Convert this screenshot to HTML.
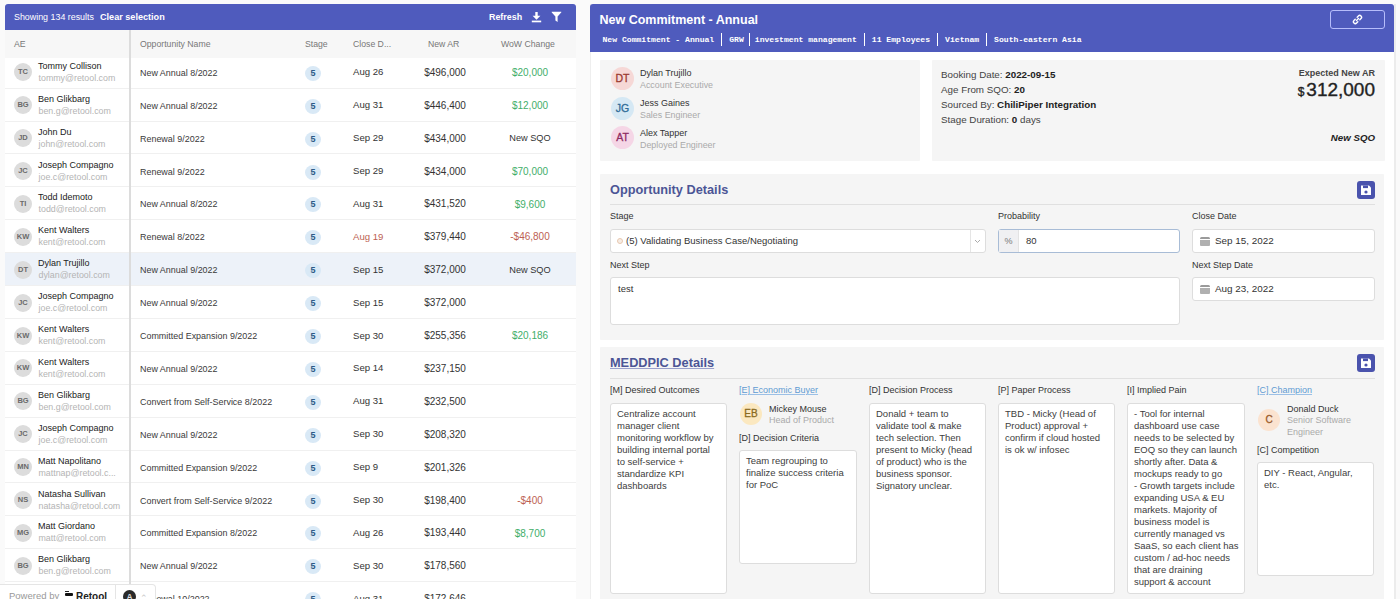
<!DOCTYPE html>
<html><head><meta charset="utf-8"><title>Opportunities</title>
<style>
*{box-sizing:border-box;margin:0;padding:0}
html,body{width:1400px;height:599px;overflow:hidden;background:#fafafa;font-family:"Liberation Sans",sans-serif;color:#333;position:relative}
.abs{position:absolute}
/* left panel */
#lp{position:absolute;left:5px;top:4px;width:571px;height:620px;background:#fff}
#lhead{position:absolute;left:5px;top:4px;width:571px;height:26px;background:#4f5bbd;border-radius:3px 3px 0 0;color:#fff;font-size:10px}
#lhead .t1{position:absolute;left:9px;top:7.5px;font-size:8.9px}
#lhead .t2{position:absolute;left:95px;top:7.5px;font-weight:bold;font-size:9.1px}
#lhead .rf{position:absolute;left:484px;top:8px;font-weight:bold;font-size:8.9px}
#thead{position:absolute;left:5px;top:30px;width:571px;height:28px;background:#f7f7f7;font-size:8.7px;color:#777;z-index:2}
#thead div{position:absolute;top:9px}
.vsep{position:absolute;left:129px;top:30px;width:1.5px;height:570px;background:#dcdcdc;z-index:3}
.row{position:absolute;left:5px;width:571px;background:#fff;height:32.9px;border-bottom:1px solid #f0f0f0;font-size:10px;color:#333}
.row.sel{background:#edf2f9}
.row .av{position:absolute;left:9px;top:7.5px;width:18px;height:18px;border-radius:50%;background:#dcdcdc;color:#6a6a6a;font-size:7.5px;font-weight:bold;text-align:center;line-height:18px}
.row .nm{position:absolute;left:33px;top:5px;font-size:9px;color:#222}
.row .em{position:absolute;left:33.5px;top:17px;font-size:8.85px;color:#b4b4b4}
.row .opp{position:absolute;left:135px;top:12px;font-size:8.95px;color:#3a3a3a}
.row .badge{position:absolute;left:300px;top:10px;width:16px;height:15px;border-radius:50%;background:#d9e9f6;color:#2d5b87;font-size:9px;font-weight:bold;text-align:center;line-height:15px}
.row .dt{position:absolute;left:348px;top:10.5px;font-size:9.6px;color:#333}
.row .dt.red{color:#bd5f53}
.row .ar{position:absolute;left:400px;width:80px;text-align:center;top:11px;font-size:10px;color:#333}
.row .wow{position:absolute;left:485px;width:80px;text-align:center;top:11.2px;font-size:10px;color:#333}
.row .wow.n{font-size:9.2px;top:11.5px}
.row .wow.g{color:#3fae6a}
.row .wow.r{color:#bd5f53}
#footer{z-index:5;position:absolute;left:0;top:584px;width:156px;height:20px;background:#fff;border:1px solid #e5e5e5;border-left:none;border-radius:0 4px 0 0;font-size:10px}
/* right panel */
#rp{position:absolute;left:590px;top:4px;width:806px;height:600px;background:#fff;border-left:1px solid #eee;border-right:2px solid #ececec}
#rhead{position:absolute;left:590px;top:4px;width:804px;height:48px;background:#4f5bbd;border-radius:3px 3px 0 0;color:#fff}
#rhead .title{position:absolute;left:9.5px;top:8.7px;font-size:12.5px;font-weight:bold}
#rhead .sub{position:absolute;left:12.5px;top:29.2px;font-family:"Liberation Mono",monospace;font-size:8.1px;font-weight:bold;white-space:nowrap}
#rhead .btn{position:absolute;left:740px;top:6px;width:55px;height:19px;border:1.8px solid #b6bdfb;border-radius:3px}
.card{position:absolute;background:#f5f5f5;border-radius:1px}
.lbl{position:absolute;font-size:9.5px;color:#333}
.inp{position:absolute;background:#fff;border:1px solid #ddd;border-radius:3px;font-size:9.5px;color:#333}
.mbox{position:absolute;background:#fff;border:1px solid #ddd;border-radius:3px;font-size:9.5px;color:#404040;padding:4px 6px;line-height:12px;white-space:nowrap;overflow:hidden}
#footer .pw{position:absolute;left:9px;top:5px;color:#999;font-size:9.5px}
#footer .rt{position:absolute;left:64px;top:5.5px;color:#222;font-size:10px;font-weight:bold;padding-left:12px}
#footer .lg{position:absolute;left:0.5px;top:2.5px;width:8px;height:3px;background:#111;border-radius:1px}#footer .lg:before{content:"";position:absolute;left:0.5px;top:-2.5px;width:3.5px;height:1.2px;background:#222}
#footer .dv{position:absolute;left:115px;top:0;width:1px;height:20px;background:#e5e5e5}
#footer .ua{position:absolute;left:123px;top:5px;width:13px;height:13px;border-radius:50%;background:#2a2a2a;color:#ddd;font-size:8.5px;font-weight:bold;text-align:center;line-height:14px}
#footer .ch{position:absolute;left:140px;top:8px;color:#c8c8c8;font-size:9px}
#rhead .sub span{display:inline-block;padding:0 7px;border-left:1.5px solid #fff;line-height:13px}
#rhead .sub span:first-child{border-left:none;padding-left:0}
.pav{position:absolute;left:11px;width:23px;height:23px;border-radius:50%;font-size:10.5px;font-weight:normal;-webkit-text-stroke:0.3px currentColor;text-align:center;line-height:23px}
.pnm{position:absolute;left:40px;font-size:9px;color:#333}
.prl{position:absolute;left:40px;font-size:8.9px;color:#aaa}
.bk{position:absolute;left:9px;font-size:9.8px;color:#444}
.bk b{color:#222}
.exp{position:absolute;right:10px;top:8px;font-size:9px;color:#444;font-weight:bold}
.amt{position:absolute;right:10px;top:18.7px;font-size:19px;color:#222;-webkit-text-stroke:0.35px #222}
.amt .dl{font-size:12px;margin-right:2px}
.nsqo{position:absolute;right:10px;top:72px;font-size:9.7px;font-weight:bold;font-style:italic;color:#222}
.ctitle{position:absolute;left:10px;font-size:12.75px;font-weight:bold;color:#4c5596}
.ctitle.u{text-decoration:underline;text-decoration-color:#9aa0cc}
.save{position:absolute;left:757px;width:18px;height:18px;background:#4a53ad;border-radius:3px}
.hr{position:absolute;left:10px;width:765px;height:1px;background:#e0e0e0}
.lbl{position:absolute;font-size:9px;color:#333}
.lbl.link{color:#5f9bd3;text-decoration:underline;text-decoration-color:#9cc0e6}
.inp{position:absolute;background:#fff;border:1px solid #ddd;border-radius:3px}
.inp .itx{position:absolute;top:5px;font-size:9.5px;color:#333;white-space:nowrap}
.inp .dot{position:absolute;left:6px;top:8px;width:6px;height:6px;border-radius:50%;border:1px solid #e8c8b0;background:#f6ece4}
.inp .selsep{position:absolute;left:359px;top:0;width:1px;height:22px;background:#e5e5e5}
.inp.prob{border-color:#a8bcd6}
.inp .pct{position:absolute;left:0;top:0;width:20px;height:22px;background:#f0f0f2;border-right:1px solid #e3e3e3;font-style:normal;font-size:9px;color:#777;text-align:center;line-height:22px}
.inp .cal{position:absolute;left:6.5px;top:6.5px;width:10px;height:9.5px;background:linear-gradient(#9a9a9a 0,#9a9a9a 1.7px,#fff 1.7px,#fff 3.3px,#b0b0b0 3.3px);border-radius:1.5px 1.5px 1px 1px}
.inp .dtx{font-size:9.9px;top:5px}
.mbox{position:absolute;background:#fff;border:1px solid #ddd;border-radius:3px;font-size:9.5px;color:#404040;padding:4px 6px;line-height:12px;white-space:nowrap;overflow:hidden}
.mav{position:absolute;width:22px;height:22px;border-radius:50%;font-size:10px;text-align:center;line-height:22px;-webkit-text-stroke:0.3px currentColor}
.mnm{position:absolute;font-size:9px;color:#333}
.mrl{position:absolute;font-size:9px;color:#aaa;line-height:12px}

</style></head><body>
<div id="lp"></div>
<div id="lhead"><span class="t1">Showing 134 results</span><span class="t2">Clear selection</span><span class="rf">Refresh</span>
<svg class="abs" style="left:526px;top:8px" width="11" height="11" viewBox="0 0 11 11"><rect x="4.3" y="0" width="2.4" height="4.5" fill="#fff"/><path d="M1.6 3.8h7.8L5.5 7.7z" fill="#fff"/><rect x="0.8" y="8.6" width="9.4" height="1.7" fill="#fff"/></svg>
<svg class="abs" style="left:546px;top:7px" width="11" height="12" viewBox="0 0 11 12"><path d="M0.8 0.8h9.4Q10.6 0.8 10.2 1.6L6.6 5.6V11L4.4 9.6V5.6L0.8 1.6Q0.4 0.8 0.8 0.8z" fill="#fff"/></svg>
</div>
<div id="thead"><div style="left:9px">AE</div><div style="left:135px">Opportunity Name</div><div style="left:300px">Stage</div><div style="left:348px">Close D...</div><div style="left:423px">New AR</div><div style="left:496px">WoW Change</div></div>
<div class="row" style="top:55.8px"><div class="av">TC</div><div class="nm">Tommy Collison</div><div class="em">tommy@retool.com</div><div class="opp">New Annual 8/2022</div><div class="badge">5</div><div class="dt">Aug 26</div><div class="ar">$496,000</div><div class="wow g">$20,000</div></div>
<div class="row" style="top:88.69999999999999px"><div class="av">BG</div><div class="nm">Ben Glikbarg</div><div class="em">ben.g@retool.com</div><div class="opp">New Annual 8/2022</div><div class="badge">5</div><div class="dt">Aug 31</div><div class="ar">$446,400</div><div class="wow g">$12,000</div></div>
<div class="row" style="top:121.6px"><div class="av">JD</div><div class="nm">John Du</div><div class="em">john@retool.com</div><div class="opp">Renewal 9/2022</div><div class="badge">5</div><div class="dt">Sep 29</div><div class="ar">$434,000</div><div class="wow n">New SQO</div></div>
<div class="row" style="top:154.5px"><div class="av">JC</div><div class="nm">Joseph Compagno</div><div class="em">joe.c@retool.com</div><div class="opp">Renewal 9/2022</div><div class="badge">5</div><div class="dt">Sep 29</div><div class="ar">$434,000</div><div class="wow g">$70,000</div></div>
<div class="row" style="top:187.39999999999998px"><div class="av">TI</div><div class="nm">Todd Idemoto</div><div class="em">todd@retool.com</div><div class="opp">New Annual 8/2022</div><div class="badge">5</div><div class="dt">Aug 31</div><div class="ar">$431,520</div><div class="wow g">$9,600</div></div>
<div class="row" style="top:220.3px"><div class="av">KW</div><div class="nm">Kent Walters</div><div class="em">kent@retool.com</div><div class="opp">Renewal 8/2022</div><div class="badge">5</div><div class="dt red">Aug 19</div><div class="ar">$379,440</div><div class="wow r">-$46,800</div></div>
<div class="row sel" style="top:253.2px"><div class="av">DT</div><div class="nm">Dylan Trujillo</div><div class="em">dylan@retool.com</div><div class="opp">New Annual 9/2022</div><div class="badge">5</div><div class="dt">Sep 15</div><div class="ar">$372,000</div><div class="wow n">New SQO</div></div>
<div class="row" style="top:286.09999999999997px"><div class="av">JC</div><div class="nm">Joseph Compagno</div><div class="em">joe.c@retool.com</div><div class="opp">New Annual 9/2022</div><div class="badge">5</div><div class="dt">Sep 15</div><div class="ar">$372,000</div><div class="wow "></div></div>
<div class="row" style="top:319.0px"><div class="av">KW</div><div class="nm">Kent Walters</div><div class="em">kent@retool.com</div><div class="opp">Committed Expansion 9/2022</div><div class="badge">5</div><div class="dt">Sep 30</div><div class="ar">$255,356</div><div class="wow g">$20,186</div></div>
<div class="row" style="top:351.9px"><div class="av">KW</div><div class="nm">Kent Walters</div><div class="em">kent@retool.com</div><div class="opp">New Annual 9/2022</div><div class="badge">5</div><div class="dt">Sep 14</div><div class="ar">$237,150</div><div class="wow "></div></div>
<div class="row" style="top:384.8px"><div class="av">BG</div><div class="nm">Ben Glikbarg</div><div class="em">ben.g@retool.com</div><div class="opp">Convert from Self-Service 8/2022</div><div class="badge">5</div><div class="dt">Aug 31</div><div class="ar">$232,500</div><div class="wow "></div></div>
<div class="row" style="top:417.7px"><div class="av">JC</div><div class="nm">Joseph Compagno</div><div class="em">joe.c@retool.com</div><div class="opp">New Annual 9/2022</div><div class="badge">5</div><div class="dt">Sep 30</div><div class="ar">$208,320</div><div class="wow "></div></div>
<div class="row" style="top:450.59999999999997px"><div class="av">MN</div><div class="nm">Matt Napolitano</div><div class="em">mattnap@retool.c...</div><div class="opp">Committed Expansion 9/2022</div><div class="badge">5</div><div class="dt">Sep 9</div><div class="ar">$201,326</div><div class="wow "></div></div>
<div class="row" style="top:483.5px"><div class="av">NS</div><div class="nm">Natasha Sullivan</div><div class="em">natasha@retool.com</div><div class="opp">Convert from Self-Service 9/2022</div><div class="badge">5</div><div class="dt">Sep 30</div><div class="ar">$198,400</div><div class="wow r">-$400</div></div>
<div class="row" style="top:516.4px"><div class="av">MG</div><div class="nm">Matt Giordano</div><div class="em">matt@retool.com</div><div class="opp">Committed Expansion 8/2022</div><div class="badge">5</div><div class="dt">Aug 26</div><div class="ar">$193,440</div><div class="wow g">$8,700</div></div>
<div class="row" style="top:549.3px"><div class="av">BG</div><div class="nm">Ben Glikbarg</div><div class="em">ben.g@retool.com</div><div class="opp">New Annual 9/2022</div><div class="badge">5</div><div class="dt">Sep 30</div><div class="ar">$178,560</div><div class="wow "></div></div>
<div class="row" style="top:582.1999999999999px"><div class="av">RS</div><div class="nm">Ryan Sm</div><div class="em">ryan@retool.com</div><div class="opp">Renewal 10/2022</div><div class="badge">5</div><div class="dt">Aug 31</div><div class="ar">$172,646</div><div class="wow "></div></div>
<div class="vsep"></div>
<div id="footer"><span class="pw">Powered by</span><span class="rt"><i class="lg"></i>Retool</span><span class="dv"></span><span class="ua">A</span><span class="ch">&#8963;</span></div>

<div id="rp"></div>
<div id="rhead"><div class="title">New Commitment - Annual</div><div class="sub"><span>New Commitment - Annual</span><span style="padding-right:5px">GRW</span><span style="padding-left:5px">investment management</span><span>11 Employees</span><span>Vietnam</span><span class="last">South-eastern Asia</span></div>
<div class="btn"><svg class="abs" style="left:21px;top:3px" width="11" height="11" viewBox="0 0 11 11"><path d="M4.5 6.5l2-2M3.2 5.2L2 6.4a1.8 1.8 0 0 0 2.6 2.6l1.2-1.2M7.8 5.8L9 4.6A1.8 1.8 0 0 0 6.4 2L5.2 3.2" stroke="#fff" stroke-width="1.4" fill="none" stroke-linecap="round"/></svg></div></div>

<div class="card" style="left:600px;top:60px;width:320px;height:100.5px">
  <div class="pav" style="top:7px;background:#f6d8d6;color:#9b3a30">DT</div>
  <div class="pnm" style="top:7.7px">Dylan Trujillo</div><div class="prl" style="top:20px">Account Executive</div>
  <div class="pav" style="top:36.5px;background:#d5e8f4;color:#2f6c98">JG</div>
  <div class="pnm" style="top:38.3px">Jess Gaines</div><div class="prl" style="top:50px">Sales Engineer</div>
  <div class="pav" style="top:66px;background:#f5d6e6;color:#8f2b62">AT</div>
  <div class="pnm" style="top:68px">Alex Tapper</div><div class="prl" style="top:80px">Deployed Engineer</div>
</div>
<div class="card" style="left:932px;top:60px;width:453px;height:100.5px">
  <div class="bk" style="top:9px">Booking Date: <b>2022-09-15</b></div>
  <div class="bk" style="top:24px">Age From SQO: <b>20</b></div>
  <div class="bk" style="top:39px">Sourced By: <b>ChiliPiper Integration</b></div>
  <div class="bk" style="top:54px">Stage Duration: <b>0</b> days</div>
  <div class="exp">Expected New AR</div>
  <div class="amt"><span class="dl">$</span>312,000</div>
  <div class="nsqo">New SQO</div>
</div>

<div class="card" style="left:600px;top:174px;width:784px;height:166px">
  <div class="ctitle" style="top:8px">Opportunity Details</div>
  <div class="save" style="top:7px"><svg width="18" height="18" viewBox="0 0 18 18"><path d="M4 4.5h8l2 2V14H4z" fill="#fff"/><rect x="6" y="4.5" width="5" height="2.6" fill="#4a53ad"/><circle cx="9" cy="11" r="1.6" fill="#4a53ad"/></svg></div>
  <div class="hr" style="top:30px"></div>
  <div class="lbl" style="left:10px;top:37px">Stage</div>
  <div class="inp" style="left:10px;top:55px;width:376px;height:24px"><i class="dot"></i><span class="itx" style="left:15px">(5) Validating Business Case/Negotiating</span><i class="selsep"></i><svg class="abs" style="left:363px;top:9px" width="7" height="5" viewBox="0 0 7 5"><path d="M1 1l2.5 2.5L6 1" stroke="#aaa" stroke-width="1" fill="none"/></svg></div>
  <div class="lbl" style="left:398px;top:37px">Probability</div>
  <div class="inp prob" style="left:398px;top:55px;width:182px;height:24px"><i class="pct">%</i><span class="itx" style="left:27px">80</span></div>
  <div class="lbl" style="left:592px;top:37px">Close Date</div>
  <div class="inp" style="left:592px;top:55px;width:183px;height:24px"><i class="cal"></i><span class="itx dtx" style="left:22px">Sep 15, 2022</span></div>
  <div class="lbl" style="left:10px;top:86px">Next Step</div>
  <div class="inp" style="left:10px;top:103px;width:570px;height:48px"><span class="itx" style="left:7px;top:5px">test</span></div>
  <div class="lbl" style="left:592px;top:86px">Next Step Date</div>
  <div class="inp" style="left:592px;top:103px;width:183px;height:24px"><i class="cal"></i><span class="itx dtx" style="left:22px">Aug 23, 2022</span></div>
</div>

<div class="card" style="left:600px;top:347px;width:784px;height:260px">
  <div class="ctitle u" style="top:8px">MEDDPIC Details</div>
  <div class="save" style="top:7px"><svg width="18" height="18" viewBox="0 0 18 18"><path d="M4 4.5h8l2 2V14H4z" fill="#fff"/><rect x="6" y="4.5" width="5" height="2.6" fill="#4a53ad"/><circle cx="9" cy="11" r="1.6" fill="#4a53ad"/></svg></div>
  <div class="hr" style="top:31px"></div>
  <div class="lbl" style="left:10px;top:38px">[M] Desired Outcomes</div>
  <div class="mbox" style="left:10px;top:56px;width:117px;height:191px">Centralize account<br>manager client<br>monitoring workflow by<br>building internal portal<br>to self-service +<br>standardize KPI<br>dashboards</div>
  <div class="lbl link" style="left:139px;top:38px">[E] Economic Buyer</div>
  <div class="mav" style="left:140px;top:56px;background:#fbe8c0;color:#8a6a20">EB</div>
  <div class="mnm" style="left:169px;top:56.5px">Mickey Mouse</div><div class="mrl" style="left:169px;top:67px">Head of Product</div>
  <div class="lbl" style="left:139px;top:86px">[D] Decision Criteria</div>
  <div class="mbox" style="left:139px;top:103px;width:118px;height:114px">Team regrouping to<br>finalize success criteria<br>for PoC</div>
  <div class="lbl" style="left:269px;top:38px">[D] Decision Process</div>
  <div class="mbox" style="left:269px;top:56px;width:117px;height:191px">Donald + team to<br>validate tool &amp; make<br>tech selection. Then<br>present to Micky (head<br>of product) who is the<br>business sponsor.<br>Signatory unclear.</div>
  <div class="lbl" style="left:398px;top:38px">[P] Paper Process</div>
  <div class="mbox" style="left:398px;top:56px;width:117px;height:191px">TBD - Micky (Head of<br>Product) approval +<br>confirm if cloud hosted<br>is ok w/ infosec</div>
  <div class="lbl" style="left:527px;top:38px">[I] Implied Pain</div>
  <div class="mbox" style="left:527px;top:56px;width:118px;height:191px">- Tool for internal<br>dashboard use case<br>needs to be selected by<br>EOQ so they can launch<br>shortly after. Data &amp;<br>mockups ready to go<br>- Growth targets include<br>expanding USA &amp; EU<br>markets. Majority of<br>business model is<br>currently managed vs<br>SaaS, so each client has<br>custom / ad-hoc needs<br>that are draining<br>support &amp; account</div>
  <div class="lbl link" style="left:657px;top:38px">[C] Champion</div>
  <div class="mav" style="left:658px;top:62px;background:#fbe3d0;color:#9a5a2a">C</div>
  <div class="mnm" style="left:687px;top:56.5px">Donald Duck</div><div class="mrl" style="left:687px;top:67px;width:70px">Senior Software Engineer</div>
  <div class="lbl" style="left:657px;top:98px">[C] Competition</div>
  <div class="mbox" style="left:657px;top:115px;width:117px;height:114px">DIY - React, Angular,<br>etc.</div>
</div>

</body></html>
